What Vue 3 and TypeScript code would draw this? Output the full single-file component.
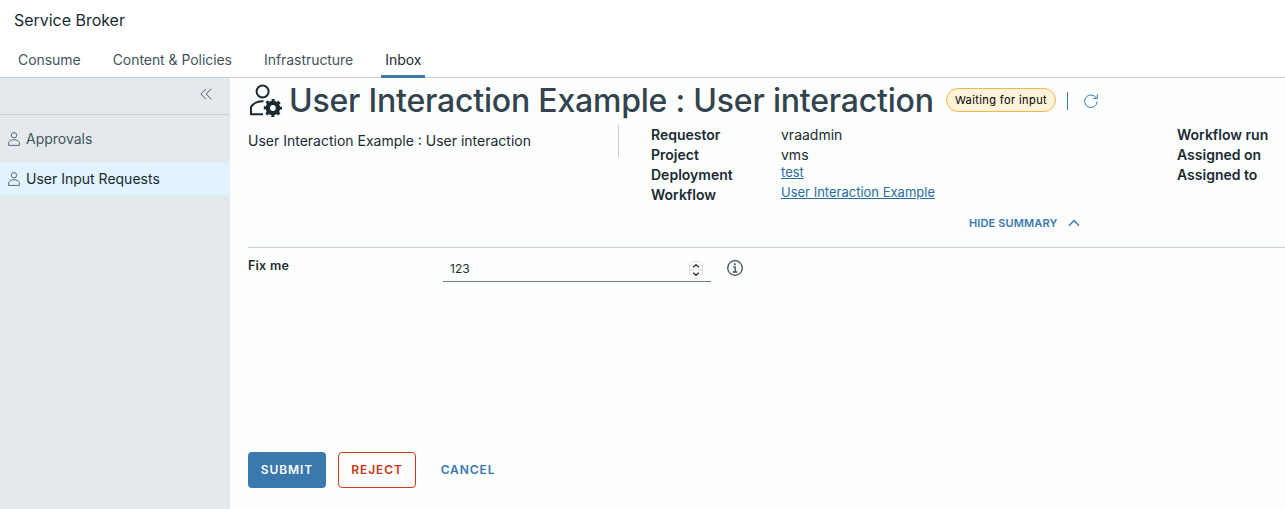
<script setup lang="ts">
import { ref } from 'vue'

interface Fact {
  label: string
  value?: string
  link?: boolean
}

const tabs: string[] = ['Consume', 'Content & Policies', 'Infrastructure', 'Inbox']
const activeTab = ref('Inbox')

const navItems: string[] = ['Approvals', 'User Input Requests']
const activeNav = ref('User Input Requests')

const facts: Fact[] = [
  { label: 'Requestor', value: 'vraadmin' },
  { label: 'Project', value: 'vms' },
  { label: 'Deployment', value: 'test', link: true },
  { label: 'Workflow', value: 'User Interaction Example', link: true },
]
const runFacts: string[] = ['Workflow run', 'Assigned on', 'Assigned to']
const answer = ref('123')
</script>

<template>
  <div class="app">
    <header class="header">
      <div class="brand">Service Broker</div>
      <nav class="tabs">
        <a v-for="t in tabs" :key="t" class="tab" :class="{ active: t === activeTab }" @click="activeTab = t"><span>{{ t }}</span></a>
      </nav>
    </header>
    <div class="body">
      <aside class="sidebar">
        <div class="collapse">
          <svg width="12" height="12" viewBox="0 0 12 12"><path d="M5.900.8.9 6l5 5.200M11.200.8 6.200 6l5 5.200" /></svg>
        </div>
        <a v-for="n in navItems" :key="n" class="nav-item" :class="{ active: n === activeNav }" @click="activeNav = n">
          <svg width="12" height="14" viewBox="0 0 12 14">
            <circle cx="6" cy="3.300" r="2.700" />
            <path d="M.6 13.400v-3C1.700 8.700 3.700 7.700 6 7.700s4.300 1 5.400 2.700v3z" />
          </svg>
          <span>{{ n }}</span>
        </a>
      </aside>
      <main class="main">
        <div class="title-row">
          <svg class="title-icon" width="34" height="34" viewBox="0 0 34 34">
            <circle class="line" cx="14.600" cy="7.500" r="6" />
            <path class="line" d="M15.500 17.300C9.500 17 5.300 19.500 3 23v7.200h12" />
            <circle class="gear-ring" cx="24.900" cy="24" r="5.100" />
            <circle class="gear-teeth" cx="24.900" cy="24" r="7.700" />
          </svg>
          <h1>User Interaction Example : User interaction</h1>
          <span class="badge">Waiting for input</span>
          <span class="sep"></span>
          <svg class="refresh" width="14" height="14" viewBox="0 0 14 14"><path d="M13.200 7.600A6.300 6.300 0 1 1 12.300 4M13.300.5v4H9.300" /></svg>
        </div>
        <section class="summary">
          <p class="desc">User Interaction Example : User interaction</p>
          <dl class="facts">
            <div v-for="f in facts" :key="f.label" class="fact">
              <dt>{{ f.label }}</dt>
              <dd><a v-if="f.link" href="#">{{ f.value }}</a><span v-else>{{ f.value }}</span></dd>
            </div>
          </dl>
          <dl class="run-facts">
            <dt v-for="r in runFacts" :key="r">{{ r }}</dt>
          </dl>
        </section>
        <div class="toggle-row">
          <span class="toggle">HIDE SUMMARY</span>
          <svg width="12" height="8" viewBox="0 0 12 8"><path d="m1 6.800 5-5.300 5 5.300" /></svg>
        </div>
        <div class="field">
          <label for="fix">Fix me</label>
          <div class="control">
            <input id="fix" v-model="answer" type="text" />
            <svg class="spin" width="14" height="18" viewBox="0 0 14 18">
              <rect x=".5" y=".5" width="13" height="17" rx="4.500" />
              <path class="mid" d="M1 9h12" />
              <path class="arr" d="m4.200 6.300 2.800-2.600 2.800 2.600M4.200 11.700 7 14.300l2.800-2.600" />
            </svg>
          </div>
          <svg class="info" width="16" height="16" viewBox="0 0 16 16">
            <circle cx="8" cy="8" r="7.300" />
            <path d="M6.200 6.900h2V12M5.700 12h4.700" />
            <circle class="dot" cx="7.900" cy="4.300" r="1" />
          </svg>
        </div>
        <div class="actions">
          <button class="btn primary">SUBMIT</button>
          <button class="btn danger">REJECT</button>
          <button class="btn link">CANCEL</button>
        </div>
      </main>
    </div>
  </div>
</template>

<style>
body { margin: 0; overflow: hidden; }
</style>
<style scoped>
.app { height: 509px; display: flex; flex-direction: column; overflow: hidden; font-family: Inter, 'Open Sans', sans-serif; color: #1b2a32; background: #fff; font-size: 14px; white-space: nowrap; }
.app * { box-sizing: border-box; }
svg { display: block; flex: none; fill: none; }
.header { height: 78px; flex: none; border-bottom: 1px solid #c9d0d4; }
.brand { height: 42px; padding-left: 14px; line-height: 41px; font-size: 16px; letter-spacing: -.03px; }
.tabs { display: flex; height: 36px; gap: 24px; padding-left: 14px; letter-spacing: -.05px; }
.tab { height: 35px; padding: 0 4px; line-height: 36px; color: #42535d; }
.tab.active { height: 36px; color: #1b2a32; border-bottom: 3px solid #3a78ad; }
.body { flex: 1; display: flex; min-height: 0; }
.sidebar { width: 230px; flex: none; background: #e4e9ed; }
.collapse { height: 37px; border-bottom: 1px solid #c9d0d5; padding: 10px 0 0 200px; margin-bottom: 8px; }
.collapse svg { stroke: #53626b; }
.nav-item { display: flex; align-items: center; height: 32px; margin-bottom: 8px; padding-left: 8px; gap: 6px; color: #42535d; line-height: 32px; }
.nav-item span { height: 32px; }
.nav-item svg { stroke: #5b6b74; }
.nav-item.active { background: #e1f3fd; color: #1b2a32; }
.main { flex: 1; min-width: 0; background: #fbfefd; padding-left: 18px; display: flex; flex-direction: column; }
.title-row { display: flex; height: 45px; align-items: center; flex: none; }
.title-icon { margin: 1px 7px 0 0; }
.line { stroke: #1b2a32; stroke-width: 2; }
.gear-ring { stroke: #1b2a32; stroke-width: 4.400; }
.gear-teeth { stroke: #1b2a32; stroke-width: 2.800; stroke-dasharray: 3 3.047; stroke-dashoffset: 1.500; }
h1 { margin: 0; width: 657px; flex: none; font-size: 32px; font-weight: 500; line-height: 44px; letter-spacing: -.21px; color: #32434d; padding-top: 1px; }
.badge { width: 110px; height: 24px; margin-bottom: 1px; border: 1px solid #f1b94a; border-radius: 12px; background: #fef2d8; color: #000; font-size: 11px; line-height: 22px; text-align: center; letter-spacing: .4px; }
.sep { width: 1px; height: 18px; margin: 0 16px 0 11px; background: #3a78ad; }
.refresh { margin-top: 1px; stroke: #3a78ad; }
.summary { display: flex; height: 89px; flex: none; padding-top: 2px; }
.desc { margin: 0; width: 371px; flex: none; height: 32px; line-height: 32px; border-right: 1px solid #ccc; }
.facts { margin: 0 0 0 32px; width: 526px; flex: none; }
.fact { display: flex; height: 20px; line-height: 20px; }
dt { width: 130px; height: 20px; line-height: 20px; font-weight: 600; }
dd { margin: 0; }
dd a { display: block; font-size: 13px; line-height: 15px; color: #2b6c9f; }
.run-facts { margin: 0; }
.toggle-row { height: 35px; flex: none; display: flex; margin-left: 721px; gap: 11px; font-size: 11px; font-weight: 600; line-height: 22px; letter-spacing: .13px; color: #3a78ad; }
.toggle-row svg { margin-top: 7px; stroke: #3a78ad; stroke-width: 1.400; }
.field { display: flex; height: 205px; flex: none; border-top: 1px solid #c9d0d0; font-size: 13px; }
label { width: 195px; line-height: 36px; font-weight: 600; font-size: 12.500px; letter-spacing: .25px; }
.control { display: flex; width: 268px; height: 25px; margin-top: 9px; border-bottom: 1px solid #6a7a83; }
input { flex: 1; min-width: 0; height: 22px; border: 0; padding: 0 7px; background: transparent; font: inherit; font-size: 12px; color: #1b2a32; outline: 0; }
.spin { margin: 4px 8px 0 0; }
.spin rect { fill: #fff; stroke: #dedede; }
.mid { stroke: #dedede; }
.arr { stroke: #333; stroke-width: 1.400; }
.info { margin: 12px 0 0 16px; stroke: #3c4e58; stroke-width: 1.300; }
.dot { fill: #3c4e58; stroke: none; }
.actions { display: flex; gap: 12px; }
.btn { width: 78px; height: 36px; padding: 0 0 2px; border: 1px solid transparent; border-radius: 4px; font: 600 12px Inter, sans-serif; letter-spacing: .9px; background: transparent; }
.primary { background: #3a78ad; color: #fff; }
.danger { border-color: #d23c1c; color: #c93517; }
.link { width: 80px; color: #3a78ad; }
</style>
